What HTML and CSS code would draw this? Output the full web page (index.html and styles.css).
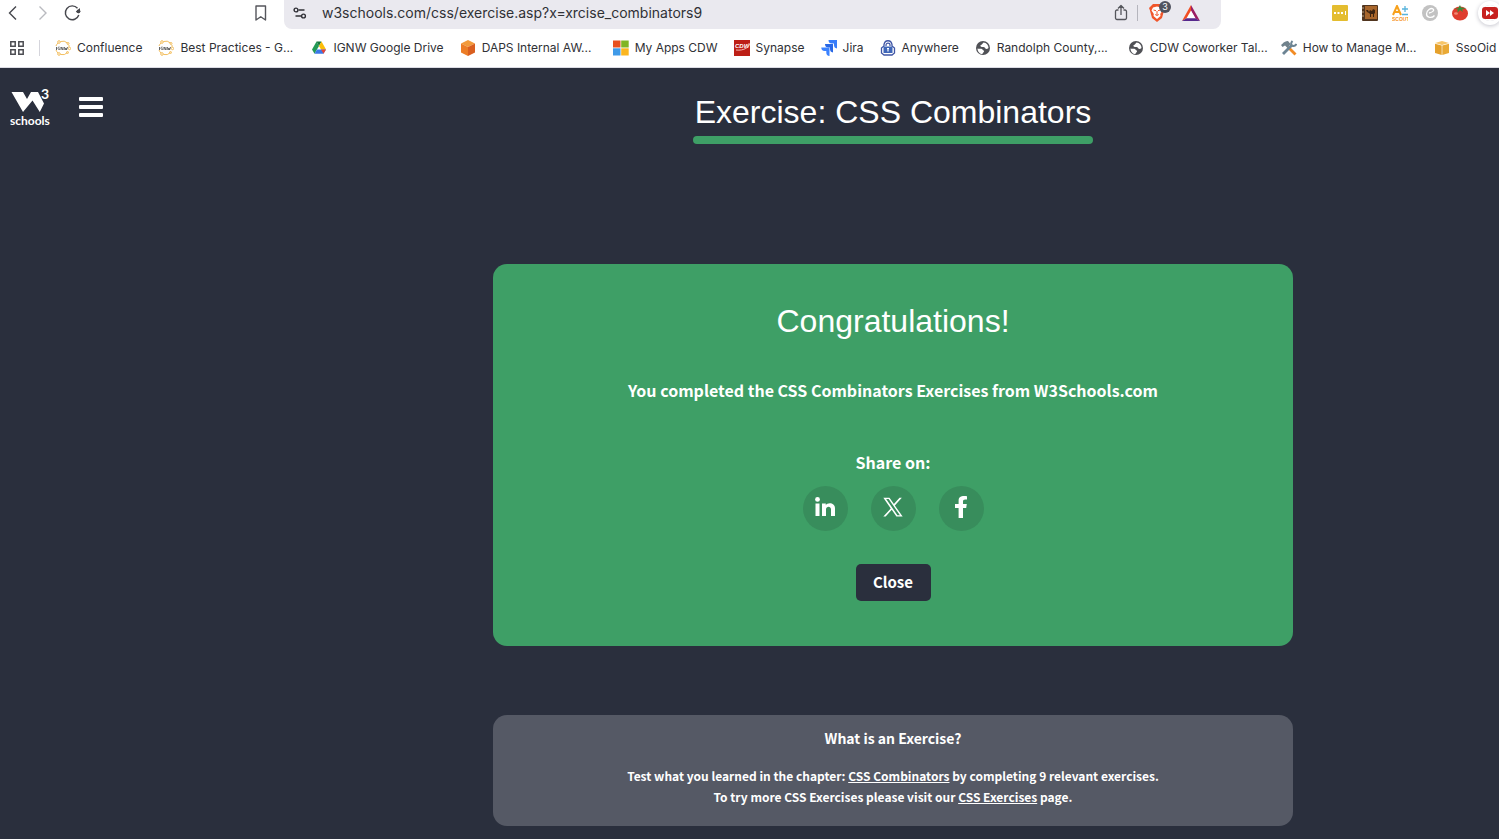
FILE: index.html
```html
<!DOCTYPE html>
<html lang="en">
<head>
<meta charset="utf-8">
<title>Exercise: CSS Combinators</title>
<link rel="stylesheet" href="styles.css">
</head>
<body>
<header class="browser">
  <div class="toolbar">
    <div class="nav">
      <button class="icon-btn" aria-label="Back"><svg width="20" height="20" viewBox="0 0 20 20" fill="none" stroke="#46474d" stroke-width="1.4"><path d="M13 3.500 6.500 10l6.500 6.500"/></svg></button>
      <button class="icon-btn" aria-label="Forward"><svg width="20" height="20" viewBox="0 0 20 20" fill="none" stroke="#b9babf" stroke-width="1.400"><path d="M6.500 3.500 13 10l-6.500 6.500"/></svg></button>
      <button class="icon-btn" aria-label="Reload"><svg width="20" height="20" viewBox="0 0 20 20"><path d="M15.800 12A6.900 6.900 0 1 1 14.500 5.300" fill="none" stroke="#46474d" stroke-width="1.400"/><path d="M12.800 8.800 17 5v3.200a2 2 0 0 1-1.800 2z" fill="#46474d"/><circle cx="15.500" cy="8.300" r="1.900" fill="#46474d"/></svg></button>
    </div>
    <button class="icon-btn bookmark" aria-label="Bookmark this page"><svg width="20" height="20" viewBox="0 0 20 20" fill="none" stroke="#55565c" stroke-width="1.400" stroke-linejoin="round"><path d="M5 3h9.500v14l-4.750-3.300L5 17z"/></svg></button>
    <div class="address">
      <button class="icon-btn small" aria-label="Site settings"><svg width="14" height="14" viewBox="0 0 14 14" fill="none" stroke="#303036" stroke-width="1.400"><circle cx="3" cy="4" r="1.900"/><path d="M5.500 4h6M2.500 10h5.500"/><circle cx="10.500" cy="10" r="1.900"/></svg></button>
      <input class="url" type="text" aria-label="Address" value="w3schools.com/css/exercise.asp?x=xrcise_combinators9">
      <button class="icon-btn small" aria-label="Share"><svg width="14" height="18" viewBox="0 0 14 18" fill="none" stroke="#55565c" stroke-width="1.300" stroke-linejoin="round"><path d="M4.500 6H3a1.500 1.500 0 0 0-1.500 1.500V14A1.500 1.500 0 0 0 3 15.500h8a1.500 1.500 0 0 0 1.500-1.500V7.500A1.500 1.500 0 0 0 11 6H9.500M7 11V2M4 4.500l3-3 3 3"/></svg></button>
      <span class="rule"></span>
      <button class="icon-btn shield" aria-label="Brave Shields"><svg width="16" height="18" viewBox="0 0 16 18"><path d="m4 0-2 2-2 2 .8 2L3 14l5 4 5-4 2.200-8 .8-2-2-2-2-2z" fill="#f0562b"/><path d="m4 3.500 4-1 4 1 1.500 3-2.300 3.500.3 2L8 15l-3.500-3 .3-2-2.300-3.500z" fill="#fff"/><path d="m4.500 6 2.500.7M11.500 6 9 6.700M6.200 10.500 8 11.500l1.800-1M8 7v4" fill="none" stroke="#f0562b"/></svg><span class="badge">3</span></button>
      <button class="icon-btn rewards" aria-label="Brave Rewards"><svg width="18" height="16" viewBox="0 0 18 16"><path d="M9 0 0 16 9 10.500z" fill="#f24e22"/><path d="m9 0 9 16-5-2.800L9 6z" fill="#9c1f63"/><path d="M0 16h18l-5-3H5z" fill="#56288c"/><path d="m9 5.500 4.500 7.700h-9z" fill="#fff"/></svg></button>
    </div>
    <div class="extensions">
      <button class="icon-btn small" aria-label="Password manager"><svg width="16" height="16" viewBox="0 0 16 16"><rect width="16" height="16" rx="1" fill="#e4bd2f"/><path d="M2 7h2v2H2zm3.500 0h2v2h-2zM9 7h2v2H9zm4-1h1v4h-1z" fill="#fff"/></svg></button>
      <button class="icon-btn small" aria-label="Camel book"><svg width="16" height="16" viewBox="0 0 16 16"><rect width="16" height="16" rx="1" fill="#51351f"/><rect x="3" y="1" width="12" height="13" fill="#a8662c"/><path d="M4 5h2l1 2 1-2 2 1 1-2 2 1v3l-1 1v3h-1V9H9v3H8V9L7 8 5 7z" fill="#3c2412"/><path d="M0 3h2M0 7h2M0 11h2" stroke="#b9a080"/></svg></button>
      <button class="icon-btn small" aria-label="A+ Scout"><svg width="16" height="16" viewBox="1 0 16 16" fill="none"><path d="m2 10 4-9 4 9M3.500 7h5" stroke="#f7a11c" stroke-width="2"/><path d="M11 4h6M14 1v6M11 9.500h6" stroke="#58b4dc" stroke-width="1.300"/><text x="1" y="15.500" font-family="Liberation Sans" font-weight="bold" font-size="5" fill="#f7941d">SCOUT</text></svg></button>
      <button class="icon-btn small" aria-label="Grammar"><svg width="16" height="16" viewBox="0 0 16 16"><circle cx="8" cy="8" r="8" fill="#c2c2c2"/><path d="M12.500 10.500c-2.500 3-8 2.500-8-1.500s4.500-6.500 6.500-5-1 3.500-4 4" fill="none" stroke="#fff" stroke-width="1.300"/></svg></button>
      <button class="icon-btn small" aria-label="Tomato timer"><svg width="16" height="16" viewBox="0 0 16 16"><ellipse cx="8" cy="8.500" rx="8" ry="7" fill="#df3d2e"/><ellipse cx="4" cy="8.500" rx="2" ry="1.300" fill="#f18872"/><path d="m2 3 4 .500L8 0l1 2.500 5 .5-4 1.500 1 2.500L8 5 5.500 7.500l.200-3z" fill="#3d8a39"/></svg></button>
      <button class="icon-btn small video" aria-label="Video speed"><svg width="16" height="16" viewBox="0 0 16 16"><rect y="2" width="16" height="12" rx="3" fill="#c7211f"/><path d="m4 5 4 3-4 3zm4 0 4 3-4 3z" fill="#fff"/></svg></button>
    </div>
  </div>
  <nav class="bookmarks" aria-label="Bookmarks">
    <button class="icon-btn small" aria-label="All bookmarks"><svg width="14" height="14" viewBox="0 0 14 14" fill="none" stroke="#4c4d52" stroke-width="1.500"><path d="M.8.8h4.400v4.400H.8zM8.800.8h4.400v4.400H8.800zM.8 8.800h4.400v4.400H.8zM8.800 8.800h4.400v4.400H8.800z"/></svg></button>
    <span class="rule"></span>
    <a class="mark" href="#"><svg width="16" height="16" viewBox="0 0 16 16" fill="none" stroke="#f0b74d" stroke-width=".9"><path d="M1 6a7 7 0 0 1 2-3M5.500 1.500A7 7 0 0 1 12.500 3M14 5v2M12.500 12.500a7 7 0 0 1-7 2M3 13a7 7 0 0 1-2-3"/><circle cx="4" cy="2" r="1.300"/><circle cx="13" cy="3.500" r="1"/><circle cx="14.500" cy="8.500" r="1.200"/><circle cx="12.500" cy="12.500" r="1"/><circle cx="4" cy="14" r="1.300"/><path d="M1.500 7v3m3-3c-2-.5-2 3 0 2.500V8.500M6 10V7l2 3V7m1.500 0 .5 3 1-2 .5 2 1-3" stroke="#555"/></svg><span>Confluence</span></a>
    <a class="mark clipped" href="#"><svg width="16" height="16" viewBox="0 0 16 16" fill="none" stroke="#f0b74d" stroke-width=".9"><path d="M1 6a7 7 0 0 1 2-3M5.500 1.500A7 7 0 0 1 12.500 3M14 5v2M12.500 12.500a7 7 0 0 1-7 2M3 13a7 7 0 0 1-2-3"/><circle cx="4" cy="2" r="1.300"/><circle cx="13" cy="3.500" r="1"/><circle cx="14.500" cy="8.500" r="1.200"/><circle cx="12.500" cy="12.500" r="1"/><circle cx="4" cy="14" r="1.300"/><path d="M1.500 7v3m3-3c-2-.5-2 3 0 2.500V8.500M6 10V7l2 3V7m1.500 0 .5 3 1-2 .5 2 1-3" stroke="#555"/></svg><span>Best Practices - G...</span></a>
    <a class="mark" href="#"><svg width="16" height="16" viewBox="0 0 16 16"><path d="M5.500 1.500 1 9.500l2.500 4.300L8 6z" fill="#239a55"/><path d="M5.500 1.500h5L8 6z" fill="#16773b"/><path d="m10.500 1.500 4.500 8h-5L8 6z" fill="#fbbd08"/><path d="M3.500 13.800 6 9.500h9l-2.500 4.300z" fill="#3b78e7"/><path d="M10 9.500h5l-2.500 4.300z" fill="#e94435"/></svg><span>IGNW Google Drive</span></a>
    <a class="mark clipped" href="#"><svg width="16" height="16" viewBox="0 0 16 16"><path d="m8 0 7 3.500L8 7 1 3.500z" fill="#f29a3b"/><path d="M1 3.500 8 7v9l-7-3.500z" fill="#ec7d26"/><path d="M15 3.500 8 7v9l7-3.500z" fill="#d95f20"/></svg><span>DAPS Internal AW...</span></a>
    <a class="mark" href="#"><svg width="16" height="16" viewBox="0 0 16 16"><path d="M0 .5h7.500v7H0z" fill="#e8501f"/><path d="M8.200.5h7.500v7H8.200z" fill="#80b523"/><path d="M0 8.300h7.500v7.200H0z" fill="#3f9ae8"/><path d="M8.200 8.300h7.500v7.200H8.200z" fill="#fbb620"/></svg><span>My Apps CDW</span></a>
    <a class="mark" href="#"><svg width="16" height="16" viewBox="0 0 16 16"><path d="M0 0h16v16H0z" fill="#bd1f16"/><text x="1" y="8" font-family="Liberation Sans" font-size="6" font-weight="bold" font-style="italic" fill="#fff">CDW</text><path d="M15 3c1 4-5 8-13 7" fill="none" stroke="#f5b9b3"/></svg><span>Synapse</span></a>
    <a class="mark" href="#"><svg width="16" height="16" viewBox="0 0 16 16"><path d="M7.500 0H16v8.500a3.500 3.500 0 0 1-3-3.500V3.500H11A3.500 3.500 0 0 1 7.500 0z" fill="#377dfa"/><path d="M4 4h8v8.500A3.500 3.500 0 0 1 9 9V7.500H7.500A3.500 3.500 0 0 1 4 4z" fill="#2867e5"/><path d="M.3 7.500h8.200V16a3.500 3.500 0 0 1-3.200-3.500V11H3.500A3.500 3.500 0 0 1 .3 7.500z" fill="#3b82ff"/></svg><span>Jira</span></a>
    <a class="mark" href="#"><svg width="16" height="16" viewBox="0 0 16 16"><path d="M4 6V4.500C5-.5 11-.5 12 4.500V6l2.500 2v5L12 15H4l-2.500-2V8z" fill="#fff" stroke="#3f55a5" stroke-width="1.300"/><path d="M6 6V5c0-2.500 4-2.500 4 0v1" fill="none" stroke="#3f55a5" stroke-width="1.200"/><path d="M3.500 6.500h9v6.500h-9z" fill="#3f66b8"/><path d="M8 8v3.500M7 8.500h2" stroke="#fff" stroke-width="1.200"/></svg><span>Anywhere</span></a>
    <a class="mark clipped" href="#"><svg width="16" height="16" viewBox="0 0 16 16"><circle cx="8" cy="8" r="7" fill="#505156"/><path d="M2.500 8.500c2.500.5 4.500-.5 5 1s2 .5 1.500 2-1.500 1-1.500 2.500C5 14 2.500 12 2.500 8.500zM8.500 2.500c-2 2-1 2-2.500 2.500s0 2.500 2 2 2 2 3.500 2 1.500-1 2-1c0-3-2-5.200-5-5.500z" fill="#fff"/></svg><span>Randolph County,...</span></a>
    <a class="mark clipped" href="#"><svg width="16" height="16" viewBox="0 0 16 16"><circle cx="8" cy="8" r="7" fill="#505156"/><path d="M2.500 8.500c2.500.5 4.500-.5 5 1s2 .5 1.500 2-1.500 1-1.500 2.500C5 14 2.500 12 2.500 8.500zM8.500 2.500c-2 2-1 2-2.500 2.500s0 2.500 2 2 2 2 3.500 2 1.500-1 2-1c0-3-2-5.200-5-5.500z" fill="#fff"/></svg><span>CDW Coworker Tal...</span></a>
    <a class="mark clipped" href="#"><svg width="16" height="16" viewBox="0 0 16 16" fill="none"><path d="m7 7 7.500 7.500" stroke="#f28b24" stroke-width="2.800"/><path d="m2 14 9-9" stroke="#6c8493" stroke-width="2.800"/><path d="M11.500 1c-2 2-1.500 4-.5 4.500s3 1 4.500-1.500" stroke="#6c8493" stroke-width="2"/><path d="M0 5C2 4 2 1.500 7 1L9.500 4 6.500 8 4 5.500 1.500 7z" fill="#71828c"/></svg><span>How to Manage M...</span></a>
    <a class="mark" href="#"><svg width="16" height="16" viewBox="0 0 16 16"><path d="m8 1 7 2-7 2-7-2z" fill="#f7c568"/><path d="M1 3.800 7.700 5.500V15L1 13z" fill="#e5a12c"/><path d="M15 3.800 8.300 5.500V15l6.700-2z" fill="#e9a935"/></svg><span>SsoOid</span></a>
  </nav>
</header>
<div class="page">
  <aside class="side">
    <a class="logo" href="#" aria-label="W3Schools"><svg width="44" height="42" viewBox="0 0 44 42" fill="#fff"><path d="M1.500 6H13l4 7 4-7h7l6 11.500-4.200 8.500-7.300-11.500L13 26z"/><text x="31" y="13" font-family="Lato" font-size="14" font-weight="bold">3</text><text x="0" y="39" font-family="Lato" font-weight="bold" font-size="12">schools</text></svg></a>
    <button class="menu" aria-label="Menu"><svg width="24" height="20" viewBox="0 0 24 20" fill="#fff"><rect width="24" height="4" rx="1"/><rect y="8" width="24" height="4" rx="1"/><rect y="16" width="24" height="4" rx="1"/></svg></button>
  </aside>
  <main class="content">
    <h1 class="title">Exercise: CSS Combinators</h1>
    <section class="card done">
      <h2 class="congrats">Congratulations!</h2>
      <p class="lead">You completed the CSS Combinators Exercises from W3Schools.com</p>
      <p class="share-label">Share on:</p>
      <div class="share">
        <a class="round" href="#" aria-label="LinkedIn"><svg width="20" height="20" viewBox="0 0 20 20" fill="#fff"><circle cx="2.500" cy="2.400" r="2.400"/><path d="M.5 6.500h4V19h-4zM7 6.500h3.800v1.700c1.700-3 9.200-2.900 9.200 3.200V19h-4v-6.700c0-3.600-5-3.300-5 0V19H7z"/></svg></a>
        <a class="round" href="#" aria-label="X"><svg width="20" height="20" viewBox="0 0 24 24" fill="#fff"><path fill-rule="evenodd" d="M14.200 10.200 22.600.8h-2.800l-6.700 7.600L7.800.8H.4l8.900 12.900L.4 23.500h2.800l7.300-8.200 5.600 8.200h7.500zM3.800 2.500h3L20.300 21.800h-3z"/></svg></a>
        <a class="round" href="#" aria-label="Facebook"><svg width="14" height="22" viewBox="0 0 14 22" fill="#fff"><path d="m12.200 12 .6-4H9V5.500c0-1.200.6-2.100 2.300-2.100H13V.3C10 0 4.600-.9 4.600 4.800V8H1v4h3.600v10H9V12z"/></svg></a>
      </div>
      <button class="close">Close</button>
    </section>
    <section class="card about">
      <h3 class="question">What is an Exercise?</h3>
      <p class="note">Test what you learned in the chapter: <a href="#">CSS Combinators</a> by completing 9 relevant exercises.<br>To try more CSS Exercises please visit our <a href="#">CSS Exercises</a> page.</p>
    </section>
  </main>
</div>
</body>
</html>
```
FILE: styles.css
```css
* { box-sizing: border-box; }
body { margin: 0; background: #2a2f3d; color: #fff; font-family: "Noto Sans CJK SC", "Noto Sans", sans-serif; overflow-x: hidden; }
button { border: 0; background: none; padding: 0; font: inherit; color: inherit; cursor: pointer; }
h1, h2, h3, p { margin: 0; }
svg { display: block; flex: none; }

.browser { background: #fff; color: #303136; border-bottom: 1px solid #dcdce4; font-family: Inter, sans-serif; overflow: hidden; }
.toolbar { display: flex; align-items: flex-start; height: 29px; }
.icon-btn { display: grid; place-items: center; position: relative; flex: none; width: 20px; height: 26px; }
.icon-btn.small { width: 16px; }
.nav { display: flex; gap: 10px; padding-left: 3px; }
.bookmark { margin-left: 168px; }
.address { display: flex; align-items: flex-start; flex: 1; height: 29px; margin-left: 13px; padding: 0 20px 0 8px; background: #eae9ef; border-radius: 0 0 8px 8px; }
.url { flex: 1; min-width: 0; height: 26px; margin-left: 14px; padding: 0; border: 0; background: none; outline: 0; font: 14px/26px Inter, sans-serif; color: #303136; }
.rule { flex: none; width: 1px; height: 16px; margin: 5px 11px 0 8px; background: #b5b5bd; }
.shield { width: 16px; }
.badge { position: absolute; left: 10px; top: 1px; width: 12px; height: 12px; border-radius: 6px; background: #50535f; color: #fff; font-size: 9px; line-height: 12px; text-align: center; }
.rewards { margin-left: 16px; }
.extensions { display: flex; gap: 14px; margin-left: 111px; padding-right: 1px; }
.video { border-radius: 50%; box-shadow: 0 0 0 4px #fff, 0 1px 4px 4px #c4c4cc; height: 16px; margin-top: 5px; }

.bookmarks { display: flex; align-items: center; height: 38px; padding: 0 0 0 9px; font-size: 12px; line-height: 14px; }
.bookmarks .rule { margin: 0 15px 0 14px; background: #d5d5dc; }
.mark { display: flex; align-items: center; gap: 6px; flex: none; color: inherit; text-decoration: none; white-space: nowrap; margin-right: 16px; }
.mark:last-child { margin-right: 0; }
.mark span { padding-bottom: 1px; }
.clipped { width: 137px; }

.page { display: flex; align-items: flex-start; }
.side { display: flex; flex: 0 0 287px; padding: 18px 10px; gap: 25px; align-items: center; }
.content { flex: 1; display: flex; flex-direction: column; align-items: center; padding: 23px 16px 13px; }
.title { font: 400 32px/42px "Liberation Sans", Arial, sans-serif; }
.title::after { content: ""; display: block; height: 8px; margin: 3px -2px 0; border-radius: 4px; background: #3e9f66; }
.card { width: 100%; max-width: 800px; border-radius: 14px; text-align: center; }
.done { display: flex; flex-direction: column; align-items: center; margin-top: 120px; padding: 32px 16px 45px; background: #3e9f66; }
.congrats { font: 400 32px/50px "Liberation Sans", Arial, sans-serif; }
.lead, .share-label { font-size: 16px; line-height: 24px; font-weight: 700; }
.lead { margin-top: 32px; }
.share-label { margin-top: 48px; }
.share { display: flex; gap: 23px; margin-top: 12px; }
.round { display: grid; place-items: center; width: 45px; height: 45px; padding-bottom: 3px; border-radius: 50%; background: #388d5c; }
.close { margin-top: 33px; width: 75px; height: 37px; padding-bottom: 2px; border-radius: 5px; background: #2a2f3d; font-size: 15px; line-height: 24px; font-weight: 700; }
.about { margin-top: 69px; padding: 11px 16px 19px; background: #555965; }
.question { font-size: 14px; line-height: 24px; font-weight: 700; }
.note { margin-top: 15px; font-size: 12px; line-height: 21px; font-weight: 700; }
.note a { color: inherit; }
```
